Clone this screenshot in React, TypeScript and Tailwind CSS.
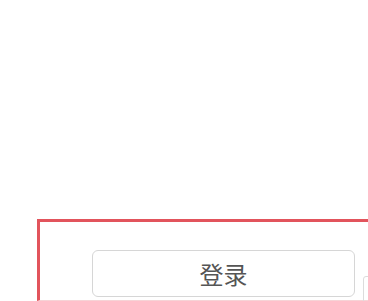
import React from "react";

export default function App() {
  return (
    <div className="w-[368px] h-[301px] overflow-hidden bg-white flex flex-col" style={{ fontFamily: '"Noto Sans CJK SC", "Noto Sans", sans-serif' }}>
      <div className="h-[219px] shrink-0" />
      <div className="flex pl-[37px]">
        <div className="w-[400px] h-[82px] shrink-0 border-l-[3px] border-t-[3px] border-b border-[#e2545c] border-b-[#f6d3d6] flex flex-col">
          <div className="h-[28px] shrink-0" />
          <div className="flex items-start pl-[52px] gap-[8px]">
            <div className="w-[263px] h-[47px] shrink-0 border border-[#d6d6d6] rounded-[6px] flex items-center justify-center text-[24px] leading-none text-[#555555]">
              登录
            </div>
            <div className="mt-[26px] w-[10px] h-[30px] shrink-0 border border-[#dcdcdc] rounded-[3px]" />
          </div>
        </div>
      </div>
    </div>
  );
}
